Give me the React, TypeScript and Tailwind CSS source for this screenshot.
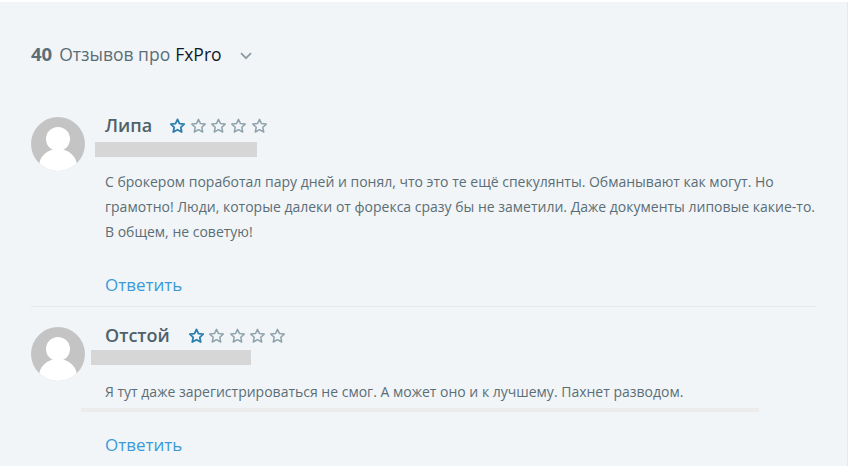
function Star({ on }: { on?: boolean }) {
  return (
    <svg width="17" height="16" viewBox="0 0 17 16" className="block">
      <path
        d="M8.5 1.4 10.5 5.6 15.2 6.1 11.8 9.3 12.7 14 8.5 11.7 4.3 14 5.2 9.3 1.8 6.1 6.5 5.6Z"
        fill="none"
        stroke={on ? "#2b7fae" : "#8fa3ad"}
        strokeWidth={on ? 1.8 : 1.5}
        strokeLinejoin="round"
      />
    </svg>
  );
}

function Stars() {
  return (
    <div className="flex gap-[3.4px]">
      <Star on />
      <Star />
      <Star />
      <Star />
      <Star />
    </div>
  );
}

function Avatar() {
  return (
    <svg width="54" height="54" viewBox="0 0 54 54" className="block shrink-0">
      <defs>
        <clipPath id="avatar-clip">
          <circle cx="27" cy="27" r="27" />
        </clipPath>
      </defs>
      <circle cx="27" cy="27" r="27" fill="#c4c4c4" />
      <g clipPath="url(#avatar-clip)" fill="#ffffff">
        <circle cx="27" cy="22" r="12" />
        <ellipse cx="27" cy="49" rx="19" ry="17" />
      </g>
    </svg>
  );
}

function Review({
  name,
  barClass,
  starGap,
  children,
}: {
  name: string;
  barClass: string;
  starGap: string;
  children: React.ReactNode;
}) {
  return (
    <div className="flex gap-5">
      <Avatar />
      <div className="flex-1 min-w-0">
        <div className={`flex items-center h-[18px] ${starGap}`}>
          <span className="mb-[2px] text-[18px] leading-[18px] font-semibold text-[#4f6169]">{name}</span>
          <Stars />
        </div>
        <div className={`h-[15px] bg-[#d6d6d6] ${barClass}`} />
        {children}
      </div>
    </div>
  );
}

const Reply = () => (
  <a className="block text-[17px] leading-[24px] text-[#3a9ad9]">Ответить</a>
);

export default function App() {
  return (
    <div
      className="w-[852px] h-[466px] overflow-hidden bg-[#ffffff]"
      style={{ fontFamily: '"Open Sans", sans-serif' }}
    >
      <div className="w-[848px] h-[464px] mt-[2px] bg-[#f1f5f8] border-r border-[#e6eaec] pl-[31px] pr-8">
        <div className="pt-[39px] flex items-center h-[65px] text-[17.5px] leading-[24px] text-[#5b6e76]">
          <span className="font-bold text-[18.5px]">40</span>
          <span className="ml-[7px]">Отзывов про</span>
          <span className="ml-[5px] text-[#111827]">FxPro</span>
          <svg width="12" height="8" viewBox="0 0 12 8" className="ml-[18px] mt-[3px]">
            <path d="M1 1.2 6 6.2 11 1.2" fill="none" stroke="#8b9aa1" strokeWidth="1.7" />
          </svg>
        </div>

        <div className="mt-[50px]">
          <Review name="Липа" barClass="mt-[7px] -ml-[10px] w-[162px]" starGap="gap-[17px]">
            <p className="mt-[12px] w-[720px] text-[14px] leading-[25px] text-[#5b6e76]">
              С брокером поработал пару дней и понял, что это те ещё спекулянты. Обманывают как могут. Но
              грамотно! Люди, которые далеки от форекса сразу бы не заметили. Даже документы липовые какие-то.
              В общем, не советую!
            </p>
            <div className="mt-[29px]">
              <Reply />
            </div>
          </Review>
        </div>

        <div className="mt-[9px] w-[785px] border-t border-[#e4e9ec]" />

        <div className="mt-[20px]">
          <Review name="Отстой" barClass="mt-[5px] -ml-[14px] w-[160px]" starGap="gap-[18px]">
            <p className="mt-[14px] text-[14px] leading-[25px] text-[#5b6e76]">
              Я тут даже зарегистрироваться не смог. А может оно и к лучшему. Пахнет разводом.
            </p>
            <div className="mt-[4px] -ml-[24px] w-[678px] h-[4px] bg-[#ececec]" />
            <div className="mt-[21px]">
              <Reply />
            </div>
          </Review>
        </div>
      </div>
    </div>
  );
}
